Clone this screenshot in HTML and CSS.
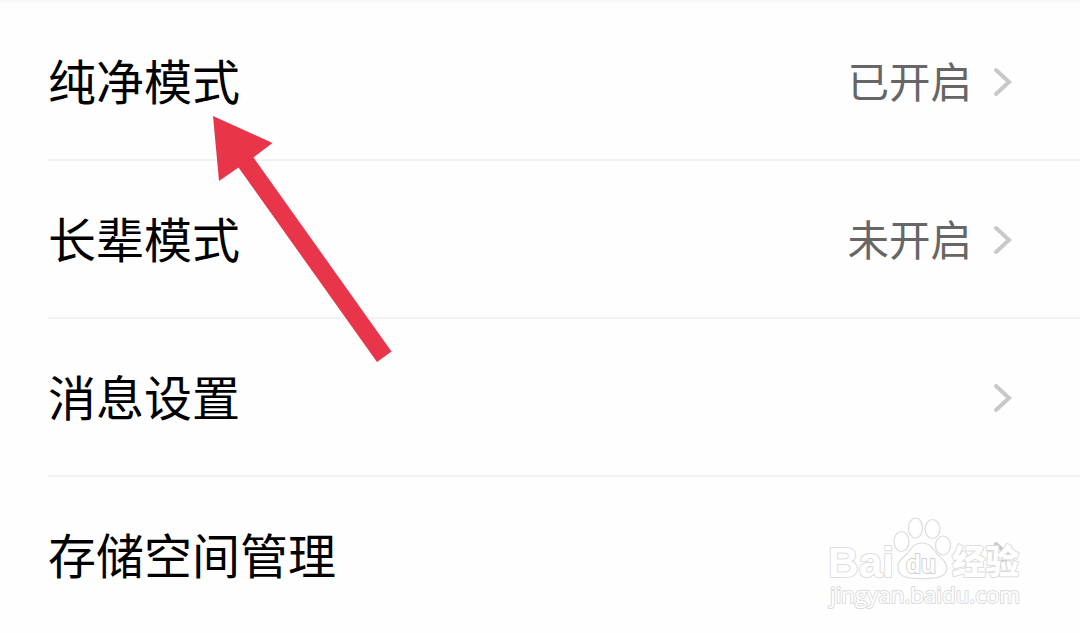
FILE: index.html
```html
<!DOCTYPE html>
<html lang="zh-CN">
<head>
    <meta charset="UTF-8">
    <title>设置</title>
    <link rel="stylesheet" href="styles.css">
</head>
<body>

<div class="settings">
    <div class="row">
        <span class="label">纯净模式</span>
        <span class="value">已开启</span>
        <svg class="chevron" viewBox="0 0 20 32"><path d="M3 4 L16 16 L3 28"/></svg>
    </div>
    <div class="row">
        <span class="label">长辈模式</span>
        <span class="value">未开启</span>
        <svg class="chevron" viewBox="0 0 20 32"><path d="M3 4 L16 16 L3 28"/></svg>
    </div>
    <div class="row">
        <span class="label">消息设置</span>
        <svg class="chevron" viewBox="0 0 20 32"><path d="M3 4 L16 16 L3 28"/></svg>
    </div>
    <div class="row">
        <span class="label">存储空间管理</span>
        <svg class="chevron" viewBox="0 0 20 32"><path d="M3 4 L16 16 L3 28"/></svg>
    </div>
</div>

<!-- red pointer over the first row -->
<svg class="arrow" viewBox="0 0 180 247">
    <polygon points="0,0 59.5,27 40.5,41.5 178.5,235.5 164,246 25.5,51.5 6,65"/>
</svg>

<svg class="watermark" viewBox="0 0 220 120">
    <text class="brand" x="8" y="72" textLength="66" lengthAdjust="spacingAndGlyphs">Bai</text>
    <ellipse cx="81.5" cy="36.5" rx="7.5" ry="10"/>
    <ellipse cx="95.5" cy="23" rx="7" ry="10"/>
    <ellipse cx="112.5" cy="24" rx="7.5" ry="9.5"/>
    <ellipse cx="123" cy="40.5" rx="7.5" ry="9.5"/>
    <path d="M102 38 C93 38 91 45 86 50 C80 55 77 58 78 64 C79 71 85 74 102 73.500 C119 74 126 71 127 64 C127 57 122 54 117 49 C113 44 111 38 102 38 Z"/>
    <text class="du" x="86" y="68" textLength="30" lengthAdjust="spacingAndGlyphs">du</text>
    <text class="cn" x="132" y="69" textLength="67" lengthAdjust="spacingAndGlyphs">经验</text>
    <text class="site" x="10" y="98" textLength="190" lengthAdjust="spacingAndGlyphs">jingyan.baidu.com</text>
</svg>

</body>
</html>
```

FILE: styles.css
```css
* {
    box-sizing: border-box;
}

body {
    margin: 0;
    height: 633px;
    overflow: hidden;
    position: relative;
    background: #fefefe;
    border-top: 3px solid #f9f9f9;
    font-family: "Noto Sans CJK SC", sans-serif;
}

.settings {
    padding-left: 48px;
}

.row {
    display: flex;
    align-items: center;
    height: 158px;
    padding-right: 67px;
    border-bottom: 2px solid #f2f2f2;
}

.row:last-child {
    border-bottom-color: transparent;
}

.label {
    flex: 1;
    font-size: 48px;
    line-height: 72px;
    padding-bottom: 5px;
    color: #000;
}

.value {
    font-size: 41.5px;
    line-height: 60px;
    padding-bottom: 2px;
    color: #666;
    margin-right: 21px;
}

.chevron {
    width: 20px;
    height: 32px;
    margin-top: 2px;
    fill: none;
    stroke: #c8c8c8;
    stroke-width: 4;
    stroke-linecap: round;
}

.arrow {
    position: absolute;
    left: 213px;
    top: 113px;
    width: 180px;
    height: 247px;
    fill: #e93549;
}

.watermark {
    position: absolute;
    left: 820px;
    top: 502px;
    width: 220px;
    height: 120px;
    fill: #fff;
    stroke: #dcdcdc;
    stroke-width: 1.2;
}

.watermark text {
    stroke-width: 2;
    paint-order: stroke;
    stroke-linejoin: round;
}

.watermark .brand {
    font: bold 43px "Liberation Sans", sans-serif;
}

.watermark .du {
    font: bold 26px "Liberation Sans", sans-serif;
    stroke: #cfcfcf;
}

.watermark .cn {
    font: 900 34px "Noto Sans CJK SC", sans-serif;
}

.watermark .site {
    font: 22px "Open Sans", sans-serif;
}
```
